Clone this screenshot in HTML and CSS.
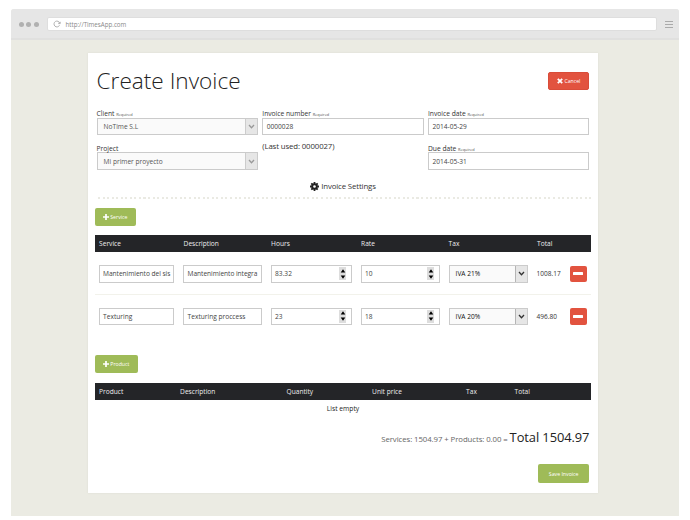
FILE: index.html
```html
<!DOCTYPE html>
<html lang="en">
<head>
<meta charset="utf-8">
<title>Create Invoice</title>
<link rel="stylesheet" href="styles.css">
</head>
<body>
<div class="window">
  <header class="bar">
    <div class="dots"><i></i><i></i><i></i></div>
    <div class="url">
      <svg width="8" height="8" viewBox="0 0 8 8"><path d="M6.5 5.3A2.9 2.9 0 1 1 6.7 3.2M5.2 3.6H7.2V1.8" fill="none" stroke="#aaa" stroke-width=".9"/></svg>
      <span>http://TimesApp.com</span>
    </div>
    <div class="burger"><i></i><i></i><i></i></div>
  </header>
  <main class="card">
    <div class="heading">
      <h1>Create Invoice</h1>
      <button class="btn cancel"><svg width="6" height="6" viewBox="0 0 6 6"><path d="M.8.8 5.2 5.2M5.2.8.8 5.2" stroke="#fff" stroke-width="1.8"/></svg>Cancel</button>
    </div>
    <div class="form">
      <div class="field"><label>Client <small>Required</small></label><div class="select muted"><span>NoTime S.L</span><b><svg width="7" height="5" viewBox="0 0 7 5"><path d="M1 1 3.5 3.7 6 1"/></svg></b></div></div>
      <div class="field"><label>Invoice number <small>Required</small></label><div class="input">0000028</div></div>
      <div class="field"><label>Invoice date <small>Required</small></label><div class="input">2014-05-29</div></div>
      <div class="field"><label>Project</label><div class="select muted"><span>Mi primer proyecto</span><b><svg width="7" height="5" viewBox="0 0 7 5"><path d="M1 1 3.5 3.7 6 1"/></svg></b></div></div>
      <div class="field last">(Last used: 0000027)</div>
      <div class="field"><label>Due date <small>Required</small></label><div class="input">2014-05-31</div></div>
    </div>
    <div class="settings">
      <svg width="9" height="9" viewBox="0 0 9 9"><circle cx="4.5" cy="4.5" r="2.3" fill="none" stroke="#222" stroke-width="1.9"/><path d="M4.5 0V1.9M4.5 7.1V9M0 4.5H1.9M7.1 4.5H9M1.3 1.3 2.7 2.7M6.3 6.3 7.7 7.7M1.3 7.7 2.7 6.3M6.3 2.7 7.7 1.3" stroke="#222" stroke-width="1.8"/></svg>
      <span>Invoice Settings</span>
    </div>
    <div class="dotted"></div>
    <button class="btn add service"><svg width="6" height="6" viewBox="0 0 6 6"><path d="M3 0V6M0 3H6" stroke="#fff" stroke-width="1.7"/></svg>Service</button>
    <div class="thead services"><span>Service</span><span>Description</span><span>Hours</span><span>Rate</span><span>Tax</span><span>Total</span></div>
    <div class="row services">
      <div class="input"><span class="tight">Mantenimiento del sis</span></div>
      <div class="input"><span class="tight">Mantenimiento integra</span></div>
      <div class="input num">83.32<b class="spin"><svg width="6" height="12" viewBox="0 0 6 12"><path d="M3 1.3 5.3 4.4H.7ZM3 10.7 5.3 7.6H.7Z"/></svg></b></div>
      <div class="input num">10<b class="spin"><svg width="6" height="12" viewBox="0 0 6 12"><path d="M3 1.3 5.3 4.4H.7ZM3 10.7 5.3 7.6H.7Z"/></svg></b></div>
      <div class="select"><span>IVA 21%</span><b><svg width="7" height="5" viewBox="0 0 7 5"><path d="M1 1 3.5 3.7 6 1"/></svg></b></div>
      <span class="sum">1008.17</span>
      <button class="minus"><i></i></button>
    </div>
    <div class="row services second">
      <div class="input"><span>Texturing</span></div>
      <div class="input"><span>Texturing proccess</span></div>
      <div class="input num">23<b class="spin"><svg width="6" height="12" viewBox="0 0 6 12"><path d="M3 1.3 5.3 4.4H.7ZM3 10.7 5.3 7.6H.7Z"/></svg></b></div>
      <div class="input num">18<b class="spin"><svg width="6" height="12" viewBox="0 0 6 12"><path d="M3 1.3 5.3 4.4H.7ZM3 10.7 5.3 7.6H.7Z"/></svg></b></div>
      <div class="select"><span>IVA 20%</span><b><svg width="7" height="5" viewBox="0 0 7 5"><path d="M1 1 3.5 3.7 6 1"/></svg></b></div>
      <span class="sum">496.80</span>
      <button class="minus"><i></i></button>
    </div>
    <button class="btn add product"><svg width="6" height="6" viewBox="0 0 6 6"><path d="M3 0V6M0 3H6" stroke="#fff" stroke-width="1.7"/></svg>Product</button>
    <div class="thead products"><span>Product</span><span>Description</span><span>Quantity</span><span>Unit price</span><span>Tax</span><span>Total</span></div>
    <div class="empty">List empty</div>
    <div class="total"><span>Services: 1504.97 + Products: 0.00 =</span><strong>Total 1504.97</strong></div>
    <button class="btn save">Save Invoice</button>
  </main>
</div>
</body>
</html>
```
FILE: styles.css
```css
* { box-sizing: border-box; }
body { margin: 0; background: #fff; font-family: "Open Sans", sans-serif; color: #333; font-size: 6.7px; }
svg { display: block; flex: none; }
button { border: 0; padding: 0; font-family: inherit; }
.window { width: 668px; height: 507px; margin: 9px 0 0 11px; background: #ebebe3; border-radius: 3px 3px 0 0; overflow: hidden; }
.bar { height: 31px; background: #e6e6e6; border-bottom: 2px solid #e0e0df; display: flex; align-items: center; padding: 1px 6px 0 8px; }
.dots { display: flex; gap: 2.3px; width: 28px; }
.dots i { width: 5px; height: 5px; border-radius: 50%; background: #b0b0b0; }
.url { width: 610px; height: 14px; background: #fff; border: 1px solid #dedede; border-radius: 2px; display: flex; align-items: center; gap: 4.5px; padding-left: 5px; font-size: 6.2px; color: #888; }
.burger { margin-left: auto; display: flex; flex-direction: column; gap: 2px; }
.burger i { width: 8px; height: 1px; background: #aaa; }

.card { width: 510px; height: 440px; margin: 13px 0 0 77px; background: #fff; box-shadow: 0 0 2px #dcdcd2; padding: 0 6.6px; }
.heading { height: 57px; display: flex; justify-content: space-between; padding: 0 2px; }
h1 { margin: 11px 0 0; font-size: 22.6px; line-height: 34px; font-weight: 300; color: #222; white-space: nowrap; }
.btn { display: flex; align-items: center; justify-content: center; height: 18px; border-radius: 2px; color: #fff; font-size: 5.2px; }
.btn.cancel { width: 41px; margin-top: 19px; background: #e2533f; border: 1px solid #d94c39; gap: 1px; }
.form { display: grid; grid-template-columns: repeat(3, 161.4px); column-gap: 4.3px; grid-auto-rows: 34.7px; padding: 0 2px; }
.field label { display: block; height: 7.6px; line-height: 7px; font-size: 6.7px; white-space: nowrap; }
.field small { font-size: 3.9px; color: #555; }
.input, .select { height: 17.5px; border: 1px solid #cbcbcb; display: flex; align-items: center; background: #fff; color: #444; font-size: 6.6px; white-space: nowrap; }
.input { padding: 0 3.5px; }
.select { justify-content: space-between; padding-left: 6px; background: #fafafa; color: #111; }
.select b { width: 12px; height: 100%; background: #e6e6e6; border-left: 1px solid #b5b5b5; display: flex; align-items: center; justify-content: center; }
.select path { fill: none; stroke: #333; stroke-width: 1.3; }
.select.muted { color: #555; }
.muted b { border-color: #ccc; }
.muted path { stroke: #999; }
.last { font-size: 7.8px; letter-spacing: -.12px; line-height: 11px; margin-top: -4px; }
.settings { height: 18px; display: flex; justify-content: center; align-items: center; gap: 2px; font-size: 7.8px; letter-spacing: -.12px; margin-top: -2px; }
.dotted { height: 2px; margin: 1.5px 0 9px 3px; background: repeating-linear-gradient(90deg, #eaeae3 0 2px, transparent 2px 4.55px); }
.add { background: #9fbb58; gap: 1px; }
.service { width: 41.5px; }
.thead { height: 17px; background: #242528; color: #eee; display: grid; align-items: center; padding-left: 4.5px; font-size: 6.6px; }
.service + .thead { margin-top: 9.5px; }
.thead.services { grid-template-columns: 84.5px 87.5px 90px 87.5px 88.5px 1fr; }
.row { height: 42.5px; display: grid; grid-template-columns: 75.5px 78.5px 81px 79px 79px 24px 18px; column-gap: 9px; align-items: center; padding: 1.5px 0 0 4px; border-bottom: 1.5px solid #f2f2eb; }
.row.second { border-bottom-color: transparent; }
.row .input, .row .select { min-width: 0; }
.row .tight { letter-spacing: -.04px; }
.num { justify-content: space-between; }
.spin { width: 7px; height: 13px; background: #ddd; display: flex; align-items: center; justify-content: center; margin-right: 1px; }
.sum { white-space: nowrap; font-size: 6.5px; }
.minus { width: 17px; height: 16.5px; background: #e2533f; border-radius: 2px; display: flex; align-items: center; justify-content: center; }
.minus i { width: 10px; height: 3px; background: #fff; border-radius: .5px; }
.product { width: 43.5px; margin-top: 18px; }
.product + .thead { margin-top: 10px; }
.products { grid-template-columns: 81px 106.5px 85.5px 94px 48.5px 1fr; }
.empty { height: 17px; line-height: 18px; text-align: center; color: #222; }
.total { height: 31px; margin-top: 11px; padding-right: 2px; display: flex; justify-content: flex-end; align-items: baseline; gap: 2px; font-size: 7.8px; letter-spacing: -.08px; color: #666; white-space: nowrap; }
.total strong { font-weight: 400; font-size: 12.9px; letter-spacing: -.08px; color: #222; }
.save { width: 51.5px; height: 19px; margin: 5px 2px 0 auto; background: #9fbb58; }
```
